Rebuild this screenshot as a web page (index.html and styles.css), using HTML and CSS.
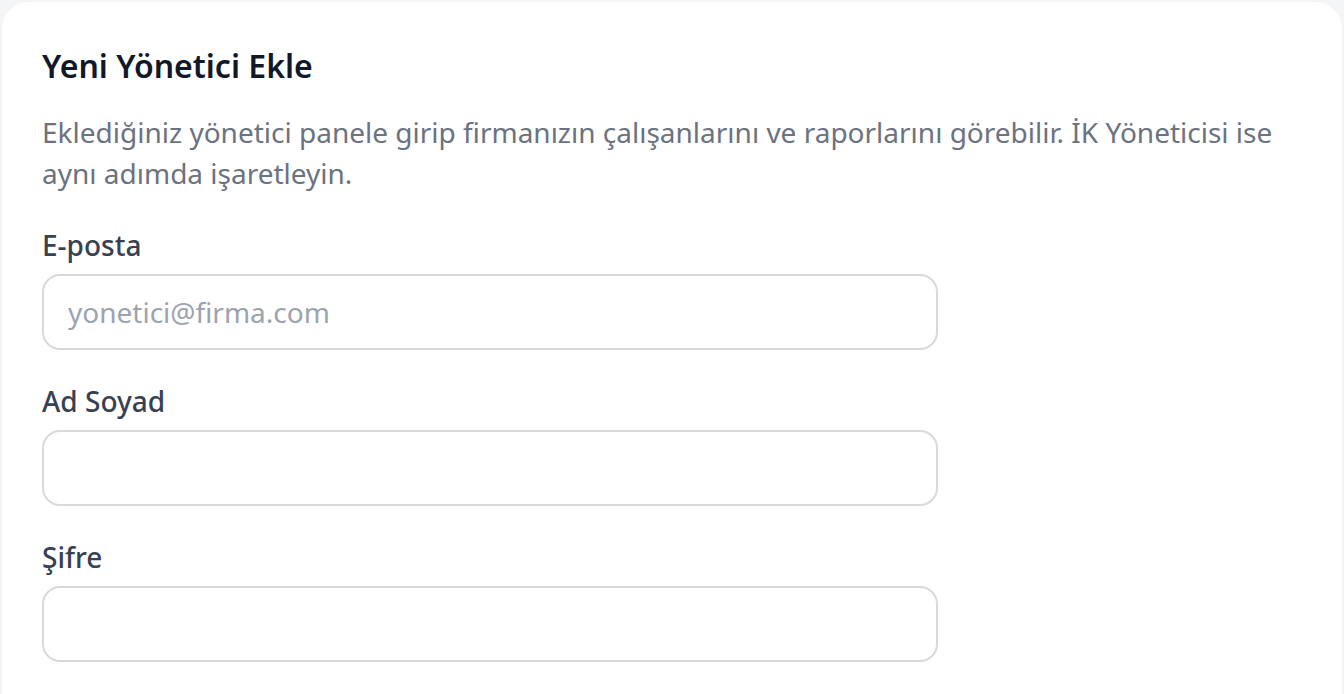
FILE: index.html
```html
<!DOCTYPE html>
<html lang="tr">
<head>
<meta charset="utf-8">
<link rel="stylesheet" href="styles.css">
</head>
<body>
<div class="card">
  <h2 class="title">Yeni Yönetici Ekle</h2>
  <p class="desc">Eklediğiniz yönetici panele girip firmanızın çalışanlarını ve raporlarını görebilir. İK Yöneticisi ise aynı adımda işaretleyin.</p>
  <div class="field">
    <label class="label">E-posta</label>
    <input class="input" type="text" placeholder="yonetici@firma.com">
  </div>
  <div class="field">
    <label class="label">Ad Soyad</label>
    <input class="input" type="text">
  </div>
  <div class="field">
    <label class="label">Şifre</label>
    <input class="input" type="password">
  </div>
</div>
</body>
</html>
```
FILE: styles.css
```css
html, body {
  margin: 0;
  padding: 0;
  background: #f4f5f7;
  font-family: "Noto Sans", "Open Sans", sans-serif;
}
body {
  padding: 2px 2px 0 2px;
  height: 694px;
  overflow: hidden;
  box-sizing: border-box;
}
.card {
  background: #ffffff;
  border-radius: 26px;
  padding: 42px 40px 40px 40px;
  min-height: 800px;
  box-shadow: 0 1px 3px rgba(0,0,0,0.04);
}
.title {
  margin: 0;
  font-size: 32px;
  font-weight: 600;
  color: #111827;
  line-height: 43px;
}
.desc {
  margin: 25px 0 0 0;
  font-size: 28px;
  line-height: 41px;
  color: #6b7280;
}
.field {
  display: flex;
  flex-direction: column;
  margin-top: 31px;
  width: 896px;
}
.label {
  font-size: 28px;
  font-weight: 500;
  color: #374151;
  line-height: 40px;
  margin-bottom: 9px;
}
.input {
  height: 76px;
  box-sizing: border-box;
  border: 2px solid #d9d9d9;
  border-radius: 18px;
  padding: 0 24px;
  font-family: inherit;
  font-size: 28px;
  color: #111827;
  background: #fff;
  outline: none;
}
.input::placeholder {
  color: #9ca3af;
}
```
